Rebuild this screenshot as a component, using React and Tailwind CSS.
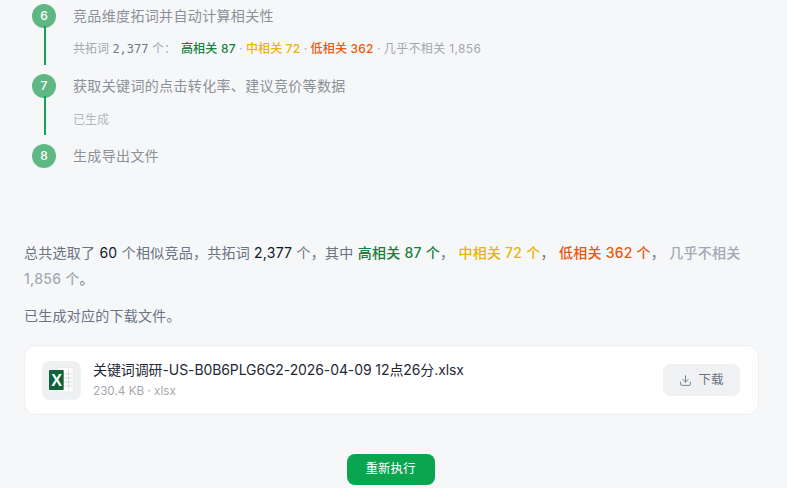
import React from 'react';
import { Download } from 'lucide-react';

const cjk = "font-['Inter','Noto_Sans_CJK_SC',sans-serif]";

const Step = ({ num, title, last, children }) => (
  <div className={`flex gap-[17px] ${last ? 'h-[24px]' : 'h-[70px]'}`}>
    <div className='w-[24px] shrink-0 flex flex-col'>
      <div className='w-[24px] h-[24px] rounded-full bg-[#5fb783] text-white text-[12px] font-medium flex items-center justify-center'>
        {num}
      </div>
      {!last && <div className='w-[2px] h-[39px] -mt-[2px] ml-[12px] bg-[#16a357]'></div>}
    </div>
    <div>
      <p className='text-[14px] leading-[24px] tracking-[0.35px] text-[#8c9098]'>{title}</p>
      {children}
    </div>
  </div>
);

const ExcelIcon = () => (
  <svg width='25' height='26' viewBox='0 0 25 26'>
    <rect x='8' y='0.5' width='16.7' height='24.5' rx='1' fill='#fbfbfb' stroke='#e1e3e6' strokeWidth='0.6' />
    <path d='M15.5 7h8M15.5 11h8M15.5 15h8M15.5 19h8M19.5 3v19' stroke='#cdd1d5' strokeWidth='0.7' fill='none' />
    <rect x='0' y='3' width='14.7' height='20' rx='0.8' fill='#10623a' />
    <text x='7.6' y='18.8' textAnchor='middle' fontSize='16' fontWeight='700' fill='#fff' fontFamily='Liberation Sans, sans-serif'>X</text>
  </svg>
);

export default function App() {
  return (
    <div className={`w-[787px] h-[488px] overflow-hidden bg-[#f6f7f9] ${cjk}`}>
      <div className='pt-[4px] pl-[32px]'>
        <Step num={6} title='竞品维度拓词并自动计算相关性'>
          <p className='mt-[12px] text-[12px] leading-[18px] text-[#a3a7ae] whitespace-nowrap'>
            <span>共拓词 </span>
            <span className="font-['DejaVu_Sans_Mono','Noto_Sans_CJK_SC',monospace] text-[#74787f] text-[12px]">2,377</span>
            <span> 个：</span>
            <span className='ml-[5px] text-[#15803d] font-medium tracking-[0.2px]'>高相关 87</span>
            <span> · </span>
            <span className='text-[#eab308] font-medium tracking-[0.15px]'>中相关 72</span>
            <span> · </span>
            <span className='text-[#ea580c] font-medium tracking-[0.2px]'>低相关 362</span>
            <span> · </span>
            <span className='tracking-[0.35px]'>几乎不相关 1,856</span>
          </p>
        </Step>
        <Step num={7} title='获取关键词的点击转化率、建议竞价等数据'>
          <p className='mt-[13px] text-[12px] leading-[18px] text-[#b4b8be]'>已生成</p>
        </Step>
        <Step num={8} title='生成导出文件' last />
      </div>

      <div className='mt-[72px] ml-[24px] w-[735px]'>
        <p className='text-[14px] leading-[26px] tracking-[0.25px] text-[#6b7280]'>
          总共选取了 <span className='text-[#111827]'>60</span> 个相似竞品，共拓词{' '}
          <span className='text-[#111827]'>2,377</span> 个，其中{' '}
          <span className='text-[#15803d] font-medium'>高相关 87 个</span>，{' '}
          <span className='text-[#eab308] font-medium'>中相关 72 个</span>，{' '}
          <span className='text-[#ea580c] font-medium'>低相关 362 个</span>，{' '}
          <span className='text-[#a3a9b3] font-medium'>几乎不相关 1,856 个</span>。
        </p>
        <p className='mt-[11px] text-[14px] leading-[26px] tracking-[0.25px] text-[#6b7280]'>已生成对应的下载文件。</p>

        <div className='mt-[16px] h-[70px] bg-white border border-[#eeeff1] rounded-[12px] flex items-center pl-[17px] pr-[18px]'>
          <div className='w-[39px] h-[39px] rounded-[8px] bg-[#eff0f1] flex items-center justify-center'>
            <ExcelIcon />
          </div>
          <div className='ml-[12px] flex-1'>
            <p className='text-[14px] leading-[20px] -mt-[1px] tracking-[-0.1px] text-[#1f2937]'>关键词调研-US-B0B6PLG6G2-2026-04-09 12点26分.xlsx</p>
            <p className='text-[11.7px] leading-[16px] mt-[3px] text-[#a3a7ae]'>230.4 KB · xlsx</p>
          </div>
          <button className='w-[77px] h-[32px] rounded-[8px] bg-[#f0f1f3] text-[#6b7280] text-[12.5px] flex items-center justify-center gap-[6px]'>
            <Download size={13} strokeWidth={1.6} />
            下载
          </button>
        </div>

        <div className='mt-[39px] flex justify-center pr-[2px]'>
          <button className='w-[88px] h-[31px] rounded-[8px] bg-[#0ba44f] text-white text-[12.5px]'>重新执行</button>
        </div>
      </div>
    </div>
  );
}
